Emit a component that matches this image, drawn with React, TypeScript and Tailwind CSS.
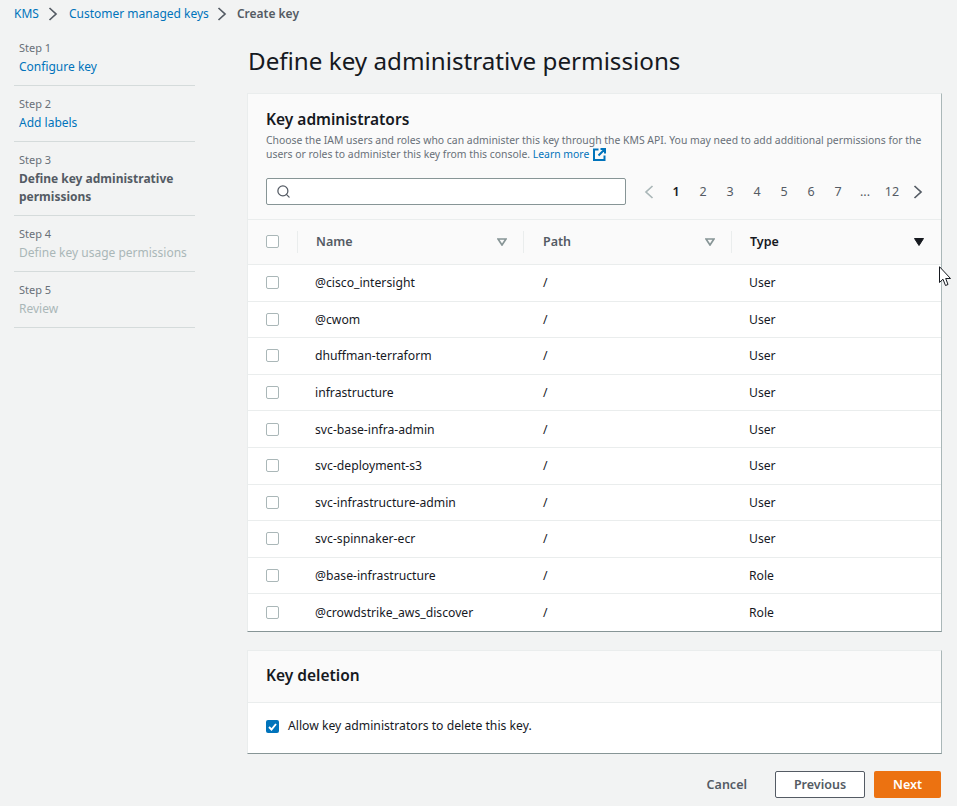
import { Search } from "lucide-react"

const rows = [
  ["@cisco_intersight", "User"],
  ["@cwom", "User"],
  ["dhuffman-terraform", "User"],
  ["infrastructure", "User"],
  ["svc-base-infra-admin", "User"],
  ["svc-deployment-s3", "User"],
  ["svc-infrastructure-admin", "User"],
  ["svc-spinnaker-ecr", "User"],
  ["@base-infrastructure", "Role"],
  ["@crowdstrike_aws_discover", "Role"],
]

const steps = [
  { step: "Step 1", label: "Configure key", kind: "link" },
  { step: "Step 2", label: "Add labels", kind: "link" },
  { step: "Step 3", label: "Define key administrative permissions", kind: "active" },
  { step: "Step 4", label: "Define key usage permissions", kind: "disabled" },
  { step: "Step 5", label: "Review", kind: "disabled" },
]

function Box() {
  return <span className="block w-[13px] h-[13px] rounded-[2px] border border-[#aab7b8] bg-white" />
}

function Chevron({ left, color }: { left?: boolean; color: string }) {
  return (
    <svg width="10" height="14" viewBox="0 0 10 14" fill="none" stroke={color} strokeWidth="1.7">
      <path d={left ? "M8.500 1L2 7l6.500 6" : "M1.500 1L8 7l-6.500 6"} />
    </svg>
  )
}

function SortDown({ active }: { active?: boolean }) {
  if (active) {
    return (
      <svg width="10" height="8" viewBox="0 0 10 8">
        <path d="M0.500 0.500h9L5 7.500z" fill="#16191f" stroke="#16191f" />
      </svg>
    )
  }
  return (
    <svg width="10" height="8" viewBox="0 0 10 8">
      <path d="M1 1h8L5 7z" fill="none" stroke="#879596" strokeWidth="1.7" />
    </svg>
  )
}

export default function App() {
  const pages = ["2", "3", "4", "5", "6", "7", "...", "12"]
  return (
    <div className="relative w-[957px] h-[806px] overflow-hidden bg-[#f2f3f3] text-[#16191f] text-[13px] font-['Noto_Sans','Open_Sans',sans-serif]">
      <div className="flex items-center h-[28px] pl-[14px] text-[12px]">
        <span className="text-[#0073bb]">KMS</span>
        <span className="ml-[9px] mr-[11px]">
          <Chevron color="#545b64" />
        </span>
        <span className="text-[#0073bb]">Customer managed keys</span>
        <span className="ml-[8px] mr-[10px]">
          <Chevron color="#545b64" />
        </span>
        <span className="font-semibold text-[#545b64]">Create key</span>
      </div>

      <div className="flex">
        <div className="w-[181px] ml-[14px] mr-[52px] pt-[11px]">
          {steps.map((s) => (
            <div key={s.step} className="border-b border-[#d5dbdb] pl-[5px] pb-[9px] mb-[9px] leading-[18px]">
              <div className="text-[11px] text-[#687078]">{s.step}</div>
              <div
                className={
                  s.kind === "link"
                    ? "mt-[1px] text-[12px] text-[#0073bb]"
                    : s.kind === "active"
                      ? "mt-[1px] text-[12px] font-bold text-[#545b64]"
                      : "mt-[1px] text-[12px] text-[#aab7b8]"
                }
              >
                {s.label}
              </div>
            </div>
          ))}
        </div>

        <div className="w-[695px]">
          <h1 className="text-[24.2px] leading-[32px] ml-[1px] mt-[17px] mb-[16px] text-[#16191f]">
            Define key administrative permissions
          </h1>

          <div className="bg-white border-b border-[#879596] border-l border-l-[#eaeded] border-r border-r-[#aab7b8] border-t border-t-[#eaeded]">
            <div className="bg-[#fafafa] h-[126px] border-b border-[#eaeded] px-[18px] pt-[14px]">
              <div className="text-[15.5px] font-semibold leading-[22px]">Key administrators</div>
              <div className="text-[10.4px] leading-[13.500px] text-[#687078] mt-[4px] whitespace-nowrap">
                Choose the IAM users and roles who can administer this key through the KMS API. You may need to add
                additional permissions for the
                <br />
                users or roles to administer this key from this console.{" "}
                <span className="text-[#0073bb]">Learn more</span>
                <svg className="inline-block ml-[4px] align-[-3px]" width="13" height="13" viewBox="0 0 13 13" fill="none" stroke="#0073bb" strokeWidth="2">
                  <path d="M5.500 1.500H1v10.500h10.500V7.500M7.500 1h4.500v4.500M12 1L5.500 7.500" />
                </svg>
              </div>
              <div className="flex items-center mt-[17px]">
                <div className="flex items-center shrink-0 w-[360px] h-[27px] bg-white border border-[#879596] rounded-[2px] pl-[9px]">
                  <Search className="w-[15px] h-[15px] text-[#545b64]" strokeWidth={2} />
                </div>
                <div className="flex items-center ml-[18px] pt-[1px] text-[12.5px] text-[#545b64]">
                  <Chevron left color="#aab7b8" />
                  <span className="w-[27px] ml-[8.500px] text-center font-semibold text-[#16191f]">1</span>
                  {pages.map((p) => (
                    <span key={p} className="w-[27px] text-center">
                      {p}
                    </span>
                  ))}
                  <span className="ml-[7.500px]">
                    <Chevron color="#545b64" />
                  </span>
                </div>
              </div>
            </div>

            <div className="flex items-center h-[45px] bg-[#fafafa] border-b border-[#eaeded] text-[12.5px] font-semibold text-[#545b64]">
              <div className="w-[50px] h-[22px] pl-[18px] pb-[2px] flex items-center border-r border-[#eaeded]">
                <Box />
              </div>
              <div className="w-[226px] h-[22px] pl-[18px] pr-[16px] flex items-center justify-between border-r border-[#eaeded]">
                <span>Name</span>
                <SortDown />
              </div>
              <div className="w-[208px] h-[22px] pl-[19px] pr-[16px] flex items-center justify-between border-r border-[#eaeded]">
                <span>Path</span>
                <SortDown />
              </div>
              <div className="flex-1 h-[22px] pl-[18px] pr-[17px] flex items-center justify-between text-[#16191f]">
                <span>Type</span>
                <SortDown active />
              </div>
            </div>

            {rows.map(([name, type], i) => (
              <div
                key={name}
                className={
                  i === rows.length - 1
                    ? "flex items-center h-[36.600px] text-[12.2px] text-[#16191f]"
                    : "flex items-center h-[36.600px] border-b border-[#eaeded] text-[12.2px] text-[#16191f]"
                }
              >
                <div className="w-[67px] pl-[18px]">
                  <Box />
                </div>
                <div className="w-[228px] pt-[1px]">{name}</div>
                <div className="w-[206px] pt-[1px]">/</div>
                <div className="pt-[1px]">{type}</div>
              </div>
            ))}
          </div>

          <div className="mt-[18px] bg-white border-b border-[#879596] border-l border-l-[#eaeded] border-r border-r-[#aab7b8] border-t border-t-[#eaeded]">
            <div className="flex items-center h-[52px] bg-[#fafafa] border-b border-[#eaeded] px-[18px] pb-[1px] text-[15.5px] font-semibold">
              Key deletion
            </div>
            <div className="flex items-center h-[50px] pl-[18px] pb-[2px] text-[12.2px]">
              <span className="flex items-center justify-center w-[13px] h-[13px] rounded-[2px] bg-[#0073bb]">
                <svg width="9" height="8" viewBox="0 0 9 8" fill="none" stroke="white" strokeWidth="1.9">
                  <path d="M1 4l2.500 2.500L8 1" />
                </svg>
              </span>
              <span className="ml-[9px] pb-[2px]">Allow key administrators to delete this key.</span>
            </div>
          </div>

          <div className="flex items-center justify-end mt-[17px] pr-[1px] text-[12.5px] font-semibold">
            <span className="text-[#545b64] mr-[28px] pt-[2px]">Cancel</span>
            <span className="flex items-center justify-center w-[90px] h-[27px] pt-[2px] bg-white border border-[#545b64] rounded-[2px] text-[#545b64]">
              Previous
            </span>
            <span className="flex items-center justify-center w-[67px] h-[27px] pt-[2px] ml-[9px] bg-[#ec7211] rounded-[2px] text-white">
              Next
            </span>
          </div>
        </div>
      </div>

      <svg className="absolute left-[939px] top-[266px]" width="13" height="21" viewBox="0 0 13 21">
        <path d="M0.500 0.700V16.500L4 13.200L6.500 19.500L9 18.500L6.700 12.500H11.500z" fill="white" stroke="#16191f" strokeWidth="1" />
      </svg>
    </div>
  )
}
